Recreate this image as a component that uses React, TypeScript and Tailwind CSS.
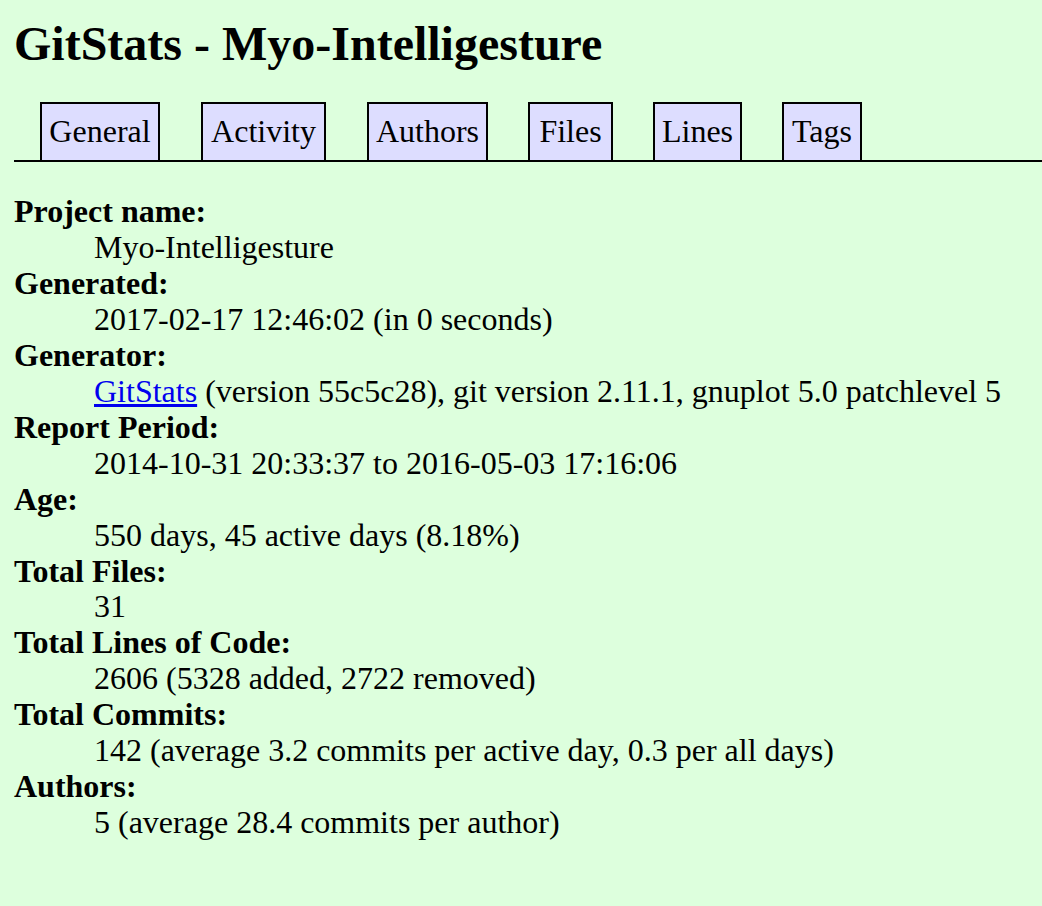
import React from "react"

const tabs = [
  { label: "General", cls: "w-[120px] ml-[26px]" },
  { label: "Activity", cls: "w-[125px] ml-[41px]" },
  { label: "Authors", cls: "w-[121px] ml-[41px]" },
  { label: "Files", cls: "w-[85px] ml-[40px]" },
  { label: "Lines", cls: "w-[89px] ml-[40px]" },
  { label: "Tags", cls: "w-[80px] ml-[40px]" },
]

const stats: { term: string; value: React.ReactNode }[] = [
  { term: "Project name", value: "Myo-Intelligesture" },
  { term: "Generated", value: "2017-02-17 12:46:02 (in 0 seconds)" },
  {
    term: "Generator",
    value: (
      <>
        <a href="#" className="text-[#0000ee] underline">
          GitStats
        </a>{" "}
        (version 55c5c28), git version 2.11.1, gnuplot 5.0 patchlevel 5
      </>
    ),
  },
  { term: "Report Period", value: "2014-10-31 20:33:37 to 2016-05-03 17:16:06" },
  { term: "Age", value: "550 days, 45 active days (8.18%)" },
  { term: "Total Files", value: "31" },
  { term: "Total Lines of Code", value: "2606 (5328 added, 2722 removed)" },
  { term: "Total Commits", value: "142 (average 3.2 commits per active day, 0.3 per all days)" },
  { term: "Authors", value: "5 (average 28.4 commits per author)" },
]

export default function App() {
  return (
    <div className="min-h-screen bg-[#ddffdd] pl-[14px] pt-[16px] text-black font-['Liberation_Serif','Times_New_Roman',serif] text-[32px] leading-[36px]">
      <h1 className="text-[48px] font-bold leading-[55px]">GitStats - Myo-Intelligesture</h1>

      {/* nav tabs */}
      <div className="mt-[31px] flex items-end border-b-2 border-black">
        {tabs.map((t) => (
          <div
            key={t.label}
            className={`${t.cls} border-2 border-b-0 border-black bg-[#ddddff] pt-[9px] pb-[11px] text-center leading-[36px]`}
          >
            {t.label}
          </div>
        ))}
      </div>

      <dl className="mt-[32px] leading-[35.95px]">
        {stats.map((s) => (
          <React.Fragment key={s.term}>
            <dt className="font-bold">{s.term}:</dt>
            <dd className="ml-[80px]">{s.value}</dd>
          </React.Fragment>
        ))}
      </dl>
    </div>
  )
}
